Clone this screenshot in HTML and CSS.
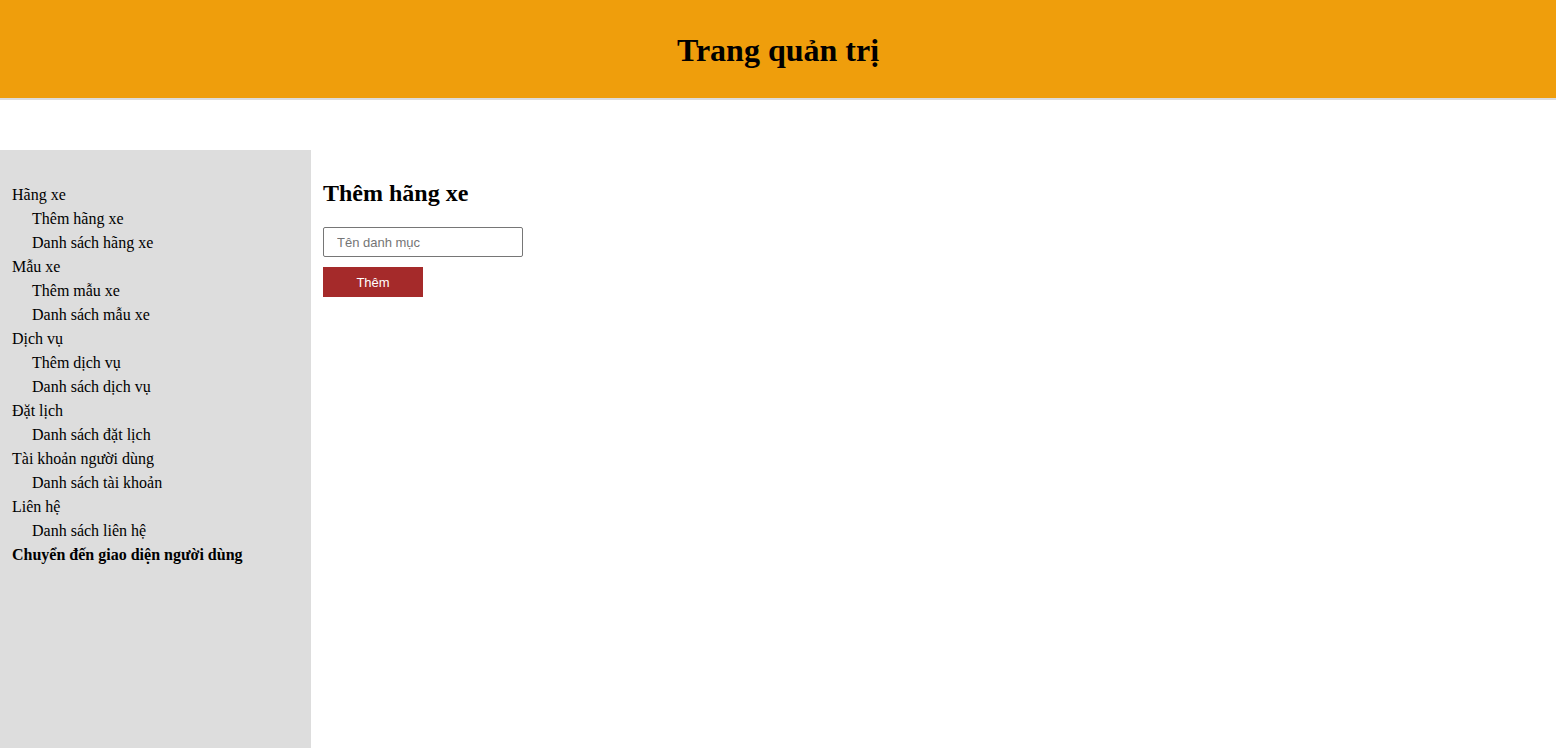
FILE: index.html
```html
<!DOCTYPE html>
<html lang="vi">
<head>
<meta charset="utf-8">
<title>Trang quản trị</title>
<link rel="stylesheet" href="styles.css">
</head>
<body>
<header class="topbar">
  <h1 class="title">Trang quản trị</h1>
</header>
<div class="layout">
  <nav class="sidebar">
    <ul class="menu">
      <li class="group">Hãng xe
        <ul class="sub">
          <li>Thêm hãng xe</li>
          <li>Danh sách hãng xe</li>
        </ul>
      </li>
      <li class="group">Mẫu xe
        <ul class="sub">
          <li>Thêm mẫu xe</li>
          <li>Danh sách mẫu xe</li>
        </ul>
      </li>
      <li class="group">Dịch vụ
        <ul class="sub">
          <li>Thêm dịch vụ</li>
          <li>Danh sách dịch vụ</li>
        </ul>
      </li>
      <li class="group">Đặt lịch
        <ul class="sub">
          <li>Danh sách đặt lịch</li>
        </ul>
      </li>
      <li class="group">Tài khoản người dùng
        <ul class="sub">
          <li>Danh sách tài khoản</li>
        </ul>
      </li>
      <li class="group">Liên hệ
        <ul class="sub">
          <li>Danh sách liên hệ</li>
        </ul>
      </li>
      <li class="group strong">Chuyển đến giao diện người dùng</li>
    </ul>
  </nav>
  <main class="content">
    <h2 class="heading">Thêm hãng xe</h2>
    <form class="form">
      <input class="field" type="text" placeholder="Tên danh mục">
      <button class="btn" type="button">Thêm</button>
    </form>
  </main>
</div>
</body>
</html>
```
FILE: styles.css
```css
* { box-sizing: border-box; }
html, body { margin: 0; padding: 0; }
body {
  font-family: "Liberation Serif", "Times New Roman", serif;
  color: #000;
  background: #fff;
}
.topbar {
  background: #ef9e0c;
  height: 100px;
  border-bottom: 2px solid #dcdcdc;
  display: flex;
  align-items: center;
  justify-content: center;
}
.title {
  margin: 0;
  font-size: 32px;
  font-weight: bold;
  line-height: 1;
  position: relative;
  top: 1px;
}
.layout {
  display: flex;
  margin-top: 50px;
  min-height: calc(100vh - 150px);
}
.sidebar {
  width: 311px;
  flex: 0 0 311px;
  background: #dddddd;
  padding: 33px 12px;
}
.menu, .sub {
  list-style: none;
  margin: 0;
  padding: 0;
}
.menu li {
  font-size: 16px;
  line-height: 24px;
}
.sub { padding-left: 20px; }
.strong { font-weight: bold; }
.content {
  flex: 1;
  padding: 29px 12px;
}
.heading {
  margin: 0 0 20px;
  font-size: 24px;
  line-height: 28px;
  font-weight: bold;
}
.form {
  display: flex;
  flex-direction: column;
  align-items: flex-start;
  gap: 10px;
}
.field {
  width: 200px;
  height: 30px;
  border: 1px solid #767676;
  border-radius: 2px;
  padding: 0 13px;
  font-family: "Liberation Sans", Arial, sans-serif;
  font-size: 13px;
  color: #000;
  outline: none;
}
.field::placeholder { color: #757575; }
.btn {
  width: 100px;
  height: 30px;
  border: none;
  background: #a52a2a;
  color: #fff;
  font-family: "Liberation Sans", Arial, sans-serif;
  font-size: 13px;
  padding: 0;
}
```
